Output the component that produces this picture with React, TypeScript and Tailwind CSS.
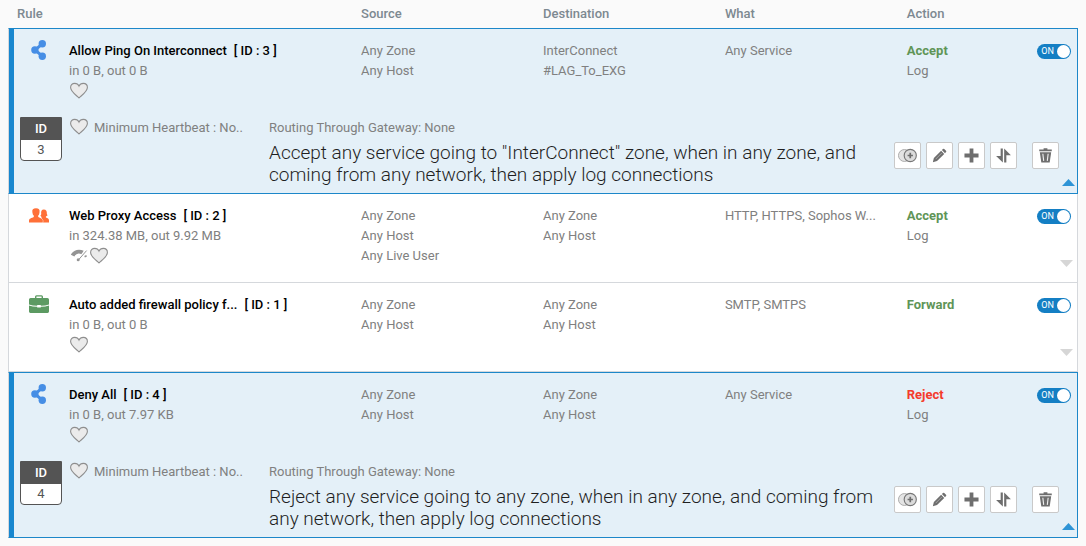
import { useState } from "react";

type RuleKind = "network" | "user" | "business";
type RuleAction = "Accept" | "Forward" | "Reject";

interface FirewallRule {
  id: number;
  kind: RuleKind;
  name: string;
  traffic: string;
  shaped?: boolean;
  source: string[];
  destination: string[];
  services: string;
  action: RuleAction;
  log: boolean;
  summary: string;
}

const RULES: FirewallRule[] = [
  {
    id: 3,
    kind: "network",
    name: "Allow Ping On Interconnect",
    traffic: "in 0 B, out 0 B",
    source: ["Any Zone", "Any Host"],
    destination: ["InterConnect", "#LAG_To_EXG"],
    services: "Any Service",
    action: "Accept",
    log: true,
    summary:
      'Accept any service going to "InterConnect" zone, when in any zone, and coming from any network, then apply log connections',
  },
  {
    id: 2,
    kind: "user",
    name: "Web Proxy Access",
    traffic: "in 324.38 MB, out 9.92 MB",
    shaped: true,
    source: ["Any Zone", "Any Host", "Any Live User"],
    destination: ["Any Zone", "Any Host"],
    services: "HTTP, HTTPS, Sophos W...",
    action: "Accept",
    log: true,
    summary:
      "Accept selected services going to any zone, when in any zone, and coming from any network, then apply log connections",
  },
  {
    id: 1,
    kind: "business",
    name: "Auto added firewall policy f...",
    traffic: "in 0 B, out 0 B",
    source: ["Any Zone", "Any Host"],
    destination: ["Any Zone", "Any Host"],
    services: "SMTP, SMTPS",
    action: "Forward",
    log: false,
    summary: "Forward SMTP and SMTPS going to any zone, when in any zone, and coming from any network",
  },
  {
    id: 4,
    kind: "network",
    name: "Deny All",
    traffic: "in 0 B, out 7.97 KB",
    source: ["Any Zone", "Any Host"],
    destination: ["Any Zone", "Any Host"],
    services: "Any Service",
    action: "Reject",
    log: true,
    summary:
      "Reject any service going to any zone, when in any zone, and coming from any network, then apply log connections",
  },
];

function HeartIcon() {
  return (
    <svg className="w-5 h-5 shrink-0" viewBox="0 0 20 20" fill="#ebebeb" stroke="#8e8e8e" strokeWidth={1.1}>
      <path d="M10 16.9 C7.2 14.2 1.6 10.6 1.6 6.5 C1.6 4 3.4 2.4 5.7 2.4 C7.8 2.4 9.2 3.4 10 5.1 C10.8 3.4 12.2 2.4 14.3 2.4 C16.6 2.4 18.4 4 18.4 6.5 C18.4 10.6 12.8 14.2 10 16.9 Z" />
    </svg>
  );
}

function GaugeIcon() {
  return (
    <svg className="w-5 h-5 shrink-0" viewBox="0 0 20 20" fill="none" stroke="#949494">
      <path d="M3.6 9.6 C5.8 5.4 10.2 4.8 13.8 6.6" strokeWidth={4} />
      <path d="M9.2 14.2 L15.6 6" stroke="#fff" strokeWidth={2.4} />
      <path d="M9 14.4 L17.6 4.6" strokeWidth={1} />
      <path d="M15.6 10.8 L17.6 9.8" strokeWidth={1.6} />
      <circle cx="9.2" cy="13.8" r="1.5" fill="#949494" stroke="none" />
    </svg>
  );
}

function KindIcon({ kind }: { kind: RuleKind }) {
  switch (kind) {
    case "network":
      return (
        <svg className="w-5 h-5 shrink-0" viewBox="0 0 20 20" fill="#468ee5">
          <path d="M13.3 3.8 L6 10 L13.3 16.2" fill="none" stroke="#468ee5" strokeWidth={3} />
          <circle cx="5.9" cy="10" r="3.7" />
          <circle cx="13.3" cy="3.7" r="3.7" />
          <circle cx="13.3" cy="16.3" r="3.7" />
        </svg>
      );
    case "user":
      return (
        <svg className="w-5 h-5 shrink-0" viewBox="0 0 20 20" fill="#ff7038">
          <path d="M12.2 11.6 L11.3 10.7 C12.1 10.1 12.3 9.5 12.2 8.6 C11.8 6 12.6 4.4 14.8 4.4 C17.2 4.4 18.1 6.2 17.8 8.4 L18.5 10.5 L16.9 11.4 V12.4 C18.6 12.9 20 13.4 20 15.2 V17.4 H14 Z" />
          <path
            d="M0 17.4 V15.6 C0 13.4 2.6 13 4.8 11.9 V10.5 C3.7 9.6 3.7 8.5 3.4 7.4 C2.8 4.6 4.2 3.2 7 3.2 C9.8 3.2 11.1 4.6 10.5 7.4 C10.3 8.5 10.2 9.6 9.2 10.5 V11.9 C11.4 13 13.7 13.4 13.8 15.6 V17.4 Z"
            stroke="#fff"
            strokeWidth={0.8}
            paintOrder="stroke"
          />
        </svg>
      );
    case "business":
      return (
        <svg className="w-5 h-5 shrink-0" viewBox="0 0 20 20" fill="#5c9a62">
          <path d="M6.7 4 V2.7 Q6.7 1.9 7.5 1.9 H12.5 Q13.3 1.9 13.3 2.7 V4" fill="none" stroke="#5c9a62" strokeWidth={1.4} />
          <path d="M1.6 4 H18.4 Q20 4 20 5.6 V10.4 Q16.5 11.6 11.8 11.7 V11 H8.2 V11.7 Q3.5 11.6 0 10.4 V5.6 Q0 4 1.6 4 Z" />
          <path d="M0 11.4 Q3.5 12.7 8.2 12.8 V13.6 H11.8 V12.8 Q16.5 12.7 20 11.4 V17.6 Q20 19 18.6 19 H1.4 Q0 19 0 17.6 Z" />
        </svg>
      );
  }
}

function StatusSwitch({ rule }: { rule: FirewallRule }) {
  const [enabled, setEnabled] = useState(true);

  return (
    <label
      className={`relative flex items-center w-[34px] h-[15px] mr-0.5 rounded-full px-px cursor-pointer ${
        enabled ? "bg-[#147fc4]" : "bg-gray-400 flex-row-reverse"
      }`}
    >
      <input
        type="checkbox"
        className="sr-only"
        aria-label={`Enable ${rule.name}`}
        checked={enabled}
        onChange={(e) => setEnabled(e.target.checked)}
      />
      <span className="flex-1 text-center text-[9px] leading-[15px] text-white">
        {enabled ? "ON" : "OFF"}
      </span>
      <span className="w-[13px] h-[13px] rounded-full bg-white"></span>
    </label>
  );
}

function ToolButton({ label, children }: { label: string; children: React.ReactNode }) {
  return (
    <button
      type="button"
      aria-label={label}
      className="w-[27px] h-[27px] flex items-center justify-center bg-white border border-[#c9c9c9] rounded-xs hover:bg-gray-50"
    >
      <svg className="w-[19px] h-[19px]" viewBox="0 0 20 20" fill="#6e6e6e">
        {children}
      </svg>
    </button>
  );
}

function RuleTools() {
  return (
    <div className="flex gap-[5px] pt-[25px] shrink-0">
      <ToolButton label="Add to group">
        <circle cx="6.8" cy="10" r="6.3" fill="#e4e4e4" stroke="#aaa" strokeWidth={1} />
        <circle cx="12.9" cy="10" r="6.4" fill="#dcdcdc" stroke="#777" strokeWidth={1.2} />
        <path d="M12 7.2 H13.8 V9.1 H15.7 V10.9 H13.8 V12.8 H12 V10.9 H10.1 V9.1 H12 Z" />
      </ToolButton>
      <ToolButton label="Edit">
        <path d="M3 17 L4.1 12.6 L11.7 5 L15 8.3 L7.4 15.9 Z" />
        <path d="M12.5 4.2 L13.6 3.1 Q14.3 2.5 15 3.1 L16.9 5 Q17.5 5.7 16.9 6.4 L15.8 7.5 Z" />
        <path d="M6 13.8 L12.4 7.4" stroke="#b5b5b5" strokeWidth={0.8} />
      </ToolButton>
      <ToolButton label="Add rule">
        <path d="M8 2.6 H12 V8 H17.4 V12 H12 V17.4 H8 V12 H2.6 V8 H8 Z" />
      </ToolButton>
      {/* opposed half arrows: left one points down, right one points up */}
      <ToolButton label="Move">
        <path d="M7 2.6 H9.3 V17.4 L2.2 10.4 H7 Z" />
        <path d="M10.7 2.6 L17.8 9.8 H13 V17.4 H10.7 Z" />
      </ToolButton>
      <div className="ml-[10px]">
        <ToolButton label="Delete">
          <path d="M8 2.4 H12 V3.6 H16.6 V5.6 H3.4 V3.6 H8 Z" />
          <path d="M4 6.6 H16 L14.4 17.4 H5.6 Z" />
          <path d="M7.2 8.2 L8.1 15.6 M12.8 8.2 L11.9 15.6" fill="none" stroke="#eee" strokeWidth={1.2} />
        </ToolButton>
      </div>
    </div>
  );
}

function Lines({ items }: { items: string[] }) {
  return (
    <>
      {items.map((item) => (
        <div key={item} className="truncate">
          {item}
        </div>
      ))}
    </>
  );
}

const getActionColor = (action: RuleAction) => {
  switch (action) {
    case "Reject":
      return "text-[#f43a2c]";
    default:
      return "text-[#5f9557]";
  }
};

function RuleRows({ rule, initiallyOpen }: { rule: FirewallRule; initiallyOpen: boolean }) {
  const [isOpen, setIsOpen] = useState(initiallyOpen);

  const cell = isOpen ? "pt-3 pb-3 border-t border-[#1c87c9]" : "pt-3 pb-[15px] border-b border-[#d5d8dc]";
  const edge = isOpen ? "shadow-[inset_5px_0_0_#1887cf]" : "";

  return (
    <tbody className={isOpen ? "bg-[#e4f0f8]" : "bg-white"}>
      <tr className="align-top">
        <td className={`${cell} ${edge} border-l border-l-[#d5d8dc] pl-5`}>
          <div className="flex">
            <div className="w-5 h-[18px] mr-5 flex items-center shrink-0">
              <KindIcon kind={rule.kind} />
            </div>
            <div>
              <div className="flex gap-[7px] font-medium text-black">
                <span>{rule.name}</span>
                <span>[ ID : {rule.id} ]</span>
              </div>
              <div>{rule.traffic}</div>
              <div className="flex h-5">
                {rule.shaped && <GaugeIcon />}
                <HeartIcon />
              </div>
            </div>
          </div>
        </td>
        <td className={cell}>
          <Lines items={rule.source} />
        </td>
        <td className={cell}>
          <Lines items={rule.destination} />
        </td>
        <td className={cell}>
          <div className="truncate">{rule.services}</div>
        </td>
        <td className={`${cell} border-r ${isOpen ? "border-r-[#1c87c9]" : "border-r-[#d5d8dc]"}`}>
          <div className="flex justify-between">
            <div>
              <div className={`font-bold ${getActionColor(rule.action)}`}>{rule.action}</div>
              {rule.log && <div>Log</div>}
            </div>
            <div className="flex flex-col items-end gap-9 pt-[3px] pr-1">
              <StatusSwitch rule={rule} />
              {!isOpen && (
                <button type="button" aria-label="Show details" onClick={() => setIsOpen(true)}>
                  <svg className="w-[13px] h-[7px]" viewBox="0 0 13 7" fill="#d6d6d6">
                    <path d="M0 0 H13 L6.5 7 Z" />
                  </svg>
                </button>
              )}
            </div>
          </div>
        </td>
      </tr>
      {isOpen && (
        <tr>
          <td
            colSpan={5}
            className={`${edge} border-l border-r border-b border-[#1c87c9] border-l-[#d5d8dc] pt-1 pb-[7px] pl-[11px]`}
          >
            <div className="flex">
              <div className="w-[42px] h-11 mr-[7px] shrink-0 flex flex-col border border-[#545454] rounded-b-sm bg-white text-center">
                <div className="bg-[#545454] text-white font-medium leading-[22px]">ID</div>
                <div className="text-[#555]">{rule.id}</div>
              </div>
              <div className="w-[200px] shrink-0 flex gap-[5px] leading-[22px]">
                <HeartIcon />
                <span>Minimum Heartbeat : No..</span>
              </div>
              <div className="flex-1 min-w-0 mr-5">
                <div className="leading-[22px] mb-[3px]">Routing Through Gateway: None</div>
                <p className="text-[19px] leading-[22px] font-light text-[#1f1f1f]">{rule.summary}</p>
              </div>
              <RuleTools />
              <button
                type="button"
                aria-label="Hide details"
                className="self-end ml-[3px] mr-0.5"
                onClick={() => setIsOpen(false)}
              >
                <svg className="w-[13px] h-[7px]" viewBox="0 0 13 7" fill="#2e94d6">
                  <path d="M0 7 H13 L6.5 0 Z" />
                </svg>
              </button>
            </div>
          </td>
        </tr>
      )}
    </tbody>
  );
}

export default function App() {
  return (
    <div className="min-h-screen bg-[#fafafa] px-2 font-['Roboto',sans-serif] text-[13px] leading-5 text-[#808080]">
      <table className="w-full table-fixed border-separate border-spacing-0">
        <thead>
          <tr className="text-left text-[#7d8991] h-7">
            <th className="w-[33%] pl-[9px] font-medium">Rule</th>
            <th className="w-[17%] font-medium">Source</th>
            <th className="w-[17%] font-medium">Destination</th>
            <th className="w-[17%] font-medium">What</th>
            <th className="w-[16%] font-medium">Action</th>
          </tr>
        </thead>
        {RULES.map((rule) => (
          <RuleRows key={rule.id} rule={rule} initiallyOpen={rule.kind === "network"} />
        ))}
      </table>
    </div>
  );
}
